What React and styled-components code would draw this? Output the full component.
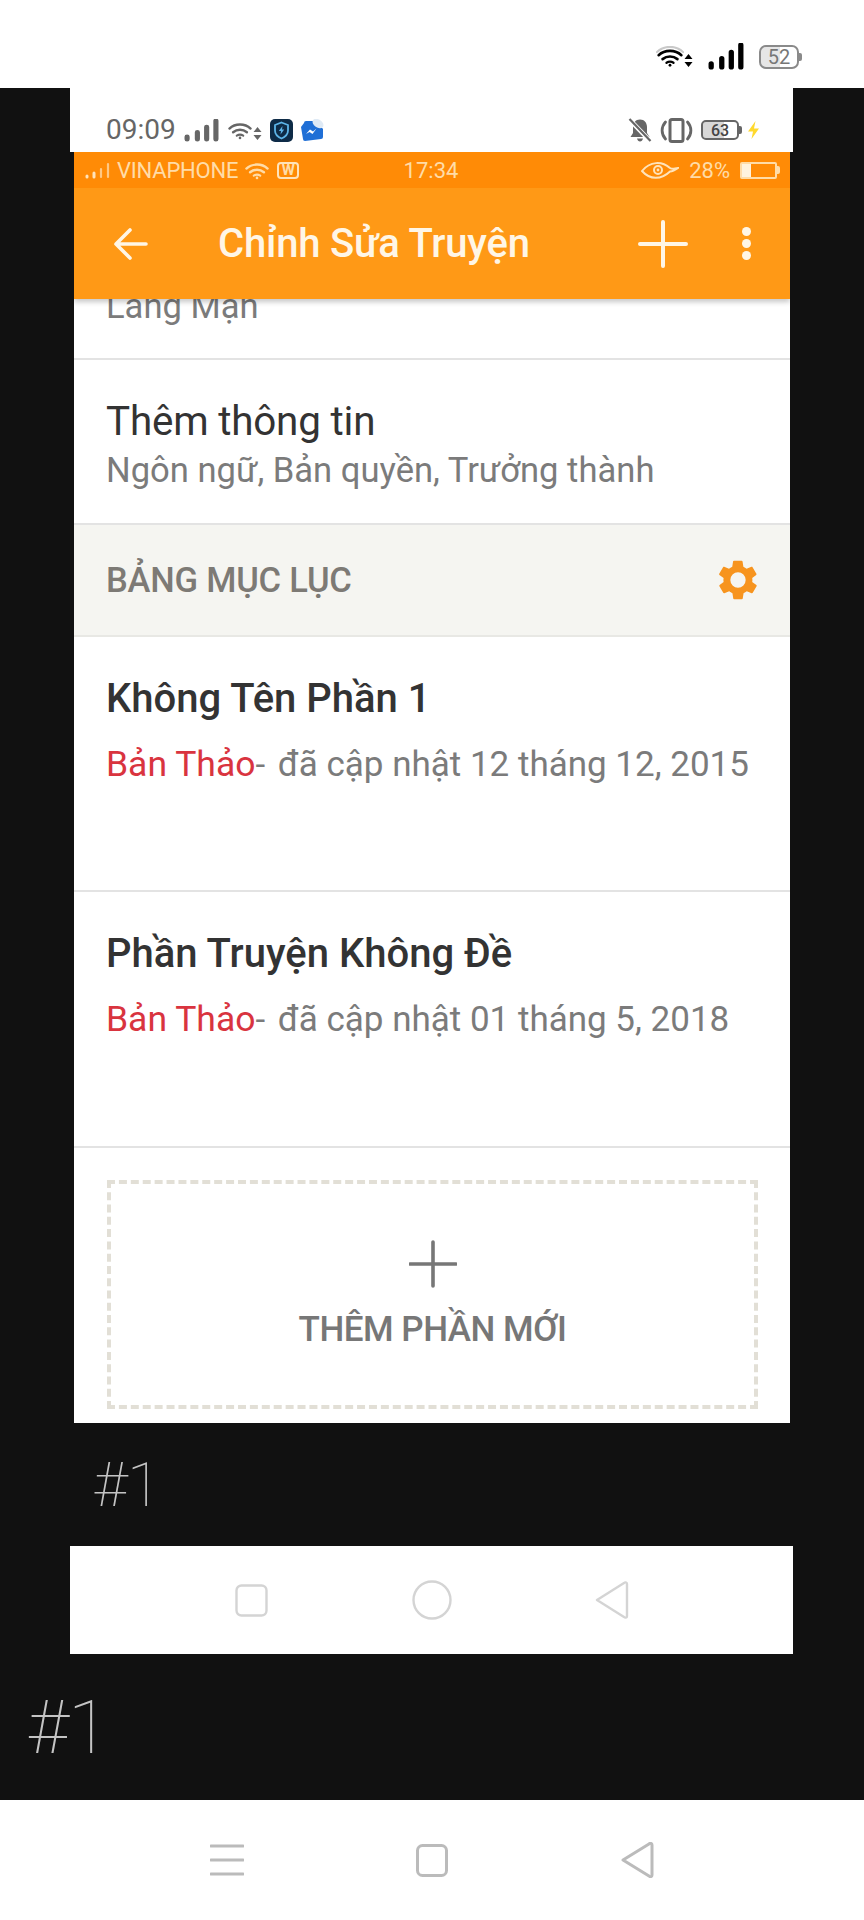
import React from 'react'
import styled, { createGlobalStyle } from 'styled-components'

const GlobalStyle = createGlobalStyle`
    html, body {
        margin: 0;
        padding: 0;
        background: #111;
    }
    body {
        font-family: Roboto, "Noto Sans", sans-serif;
    }
    * {
        box-sizing: border-box;
    }
`

const Wifi = ({ size = 32, color = '#000', ghost }) => (
    <svg width={size} height={size * 0.75} viewBox="0 0 32 24" fill="none" stroke={color} strokeLinecap="round">
        {ghost && <path d="M1 7C9 -1 23 -1 31 7" stroke={ghost} strokeWidth="2.4" />}
        <path d="M3 10.5C10 4 22 4 29 10.5" strokeWidth="3" />
        <path d="M7.5 15C12.5 11 19.5 11 24.5 15" strokeWidth="3" />
        <path d="M12 19.2C14.5 17.6 17.5 17.6 20 19.2" strokeWidth="2.6" />
        <circle cx="16" cy="22" r="1.6" fill={color} stroke="none" />
    </svg>
)

const UpDown = ({ color = '#000' }) => (
    <svg width="9" height="13" viewBox="0 0 9 13" fill={color}>
        <path d="M4.5 0L8.5 5H.5zM4.5 13L.5 8H8.500z" />
    </svg>
)

const Signal = ({ width = 36, height = 27, color = '#000', weight = 5 }) => (
    <svg width={width} height={height} viewBox="0 0 34 26" preserveAspectRatio="none" stroke={color} strokeWidth={weight} strokeLinecap="round">
        <path d="M3 20V23M13 15V23M22 9V23M31 2V23" />
    </svg>
)

const TopBar = styled.div`
    height: 88px;
    background: #fff;
    display: flex;
    justify-content: flex-end;
    align-items: flex-start;
    padding: 43px 65px 0 0;
`

const TopCluster = styled.div`
    display: flex;
    align-items: center;
    gap: 15px;
    height: 27px;
`

const WifiGroup = styled.div`
    display: flex;
    align-items: flex-end;
    gap: ${p => p.$gap || 0}px;
`

const BatteryBody = styled.div`
    position: relative;
    width: ${p => p.$w}px;
    height: ${p => p.$h}px;
    border: 2px solid ${p => p.$line};
    border-radius: ${p => p.$radius}px;
    color: ${p => p.$text};
    font-size: ${p => p.$size}px;
    font-weight: ${p => p.$weight || 400};
    display: flex;
    align-items: center;
    justify-content: center;
    background: linear-gradient(90deg, ${p => p.$fill} ${p => p.$level}%, transparent ${p => p.$level}%);
    background-clip: content-box;

    &::after {
        content: '';
        position: absolute;
        right: -5px;
        top: 50%;
        margin-top: -4px;
        width: 3px;
        height: 8px;
        background: ${p => p.$line};
        border-radius: 0 2px 2px 0;
    }
`

const Frame = styled.div`
    background: #111;
    height: 1712px;
    display: flex;
    flex-direction: column;
`

const Phone = styled.div`
    margin: 0 71px 0 70px;
    display: flex;
    flex-direction: column;
`

const PhoneStatus = styled.div`
    height: 64px;
    background: #fff;
    display: flex;
    align-items: center;
    justify-content: space-between;
    padding: 20px 33px 0 36px;
`

const StatusGroup = styled.div`
    display: flex;
    align-items: center;
    gap: ${p => p.$gap || 8}px;
`

const PhoneClock = styled.span`
    color: #666;
    font-size: 28px;
    line-height: 1;
`

const Screen = styled.div`
    margin: 0 3px 0 4px;
    height: 1271px;
    display: flex;
    flex-direction: column;
    background: #fff;
    overflow: hidden;
`

const AppBar = styled.div`
    position: relative;
    z-index: 2;
    flex: none;
    box-shadow: 0 3px 5px rgba(0, 0, 0, 0.22);
`

const OrangeStatus = styled.div`
    height: 36px;
    background: #ff8b06;
    color: #ffdca8;
    font-size: 22px;
    display: grid;
    grid-template-columns: 1fr auto 1fr;
    align-items: center;
    padding: 0 13px 0 11px;
`

const OrangeLeft = styled.div`
    display: flex;
    align-items: center;
    gap: 4px;
`

const OrangeRight = styled.div`
    display: flex;
    align-items: center;
    justify-content: flex-end;
    gap: 10px;
`

const Carrier = styled.span`
    letter-spacing: -0.2px;
    margin-right: 2px;
`

const WBadge = styled.span`
    width: 22px;
    height: 17px;
    border: 2px solid #ffe3ba;
    border-radius: 4px;
    margin-left: 3px;
    font-size: 15px;
    font-weight: 700;
    line-height: 12px;
    text-align: center;
    overflow: hidden;
`

const Toolbar = styled.div`
    height: 111px;
    background: #ff9916;
    display: flex;
    align-items: center;
    padding: 0 39px 0 40px;
`

const ToolbarTitle = styled.h1`
    flex: 1;
    margin: 0 0 0 70px;
    color: #fff6e6;
    font-size: 40px;
    font-weight: 500;
    letter-spacing: -0.2px;
    white-space: nowrap;
`

const ToolbarActions = styled.div`
    display: flex;
    align-items: center;
    gap: 54px;
`

const Dots = styled.div`
    display: flex;
    flex-direction: column;
    gap: 3px;

    i {
        display: block;
        width: 9px;
        height: 9px;
        border-radius: 50%;
        background: #fff6e6;
    }
`

const Row = styled.div`
    flex: none;
    height: ${p => p.$h}px;
    padding: ${p => p.$pad || 0} 32px 0;
    border-bottom: 2px solid #e3e3e3;
`

const GenreRow = styled(Row)`
    display: flex;
    align-items: flex-end;
    overflow: hidden;
    padding: 0 32px 32px;
`

const InfoTitle = styled.div`
    color: #333;
    font-size: 40.4px;
    line-height: 46px;
    letter-spacing: -0.2px;
    margin: 1px 0 5px;
`

const Sub = styled.div`
    color: #7b7b7b;
    font-size: ${p => p.$size || 34.6}px;
    line-height: 40px;
    white-space: nowrap;
`

const SectionHead = styled.div`
    flex: none;
    height: 112px;
    background: #f5f5f1;
    border-bottom: 2px solid #e8e8e4;
    display: flex;
    align-items: center;
    justify-content: space-between;
    padding: 0 29px 0 32px;
`

const SectionLabel = styled.span`
    color: #7d7a75;
    font-size: 34.5px;
    font-weight: 500;
    letter-spacing: -0.2px;
`

const PartTitle = styled.div`
    color: #333;
    font-size: 40px;
    font-weight: 500;
    line-height: 46px;
    margin: 2px 0 22px;
`

const Draft = styled.span`
    color: #d9343f;
    font-size: 35.5px;
`

const Dash = styled.span`
    margin-right: 4px;
`

const AddArea = styled.div`
    flex: 1;
    padding: 32px 32px 14px 33px;
`

const AddBox = styled.div`
    height: 100%;
    border: 4px dashed #e2dfd6;
    display: flex;
    flex-direction: column;
    align-items: center;
    justify-content: center;
    gap: 21px;
`

const AddLabel = styled.span`
    color: #777;
    font-size: 35px;
    font-weight: 500;
    letter-spacing: -0.5px;
`

const Caption = styled.div`
    color: #c4c4c4;
    font-weight: 100;
    font-size: ${p => p.$size}px;
    line-height: 1;
    padding-left: ${p => p.$left}px;
`

const CaptionBand = styled.div`
    flex: none;
    height: ${p => p.$h}px;
    display: flex;
    align-items: center;
`

const NavBar = styled.div`
    flex: none;
    height: ${p => p.$h}px;
    background: #fff;
    display: grid;
    grid-template-columns: repeat(3, ${p => p.$cell}px);
    justify-content: center;
    justify-items: center;
    align-items: center;
`

const OrangePlus = () => (
    <svg width="50" height="48" viewBox="0 0 50 48" stroke="#fff6e6" strokeWidth="4" strokeLinecap="round">
        <path d="M25 2V46M2 24H48" />
    </svg>
)

const Gear = () => (
    <svg width="46" height="46" viewBox="0 0 24 24" fill="#f7941e">
        <path d="M19.4 13c.1-.3.1-.7.1-1s0-.7-.1-1l2.100-1.600c.2-.2.2-.4.100-.6l-2-3.500c-.1-.2-.4-.3-.6-.2l-2.500 1c-.5-.4-1.100-.7-1.700-1l-.4-2.600c0-.3-.2-.5-.5-.5h-4c-.3 0-.5.2-.5.5l-.4 2.600c-.6.3-1.200.6-1.700 1l-2.500-1c-.2-.1-.5 0-.6.2l-2 3.500c-.1.200-.1.400.1.600L4.500 11c-.1.300-.1.700-.1 1s0 .7.1 1l-2.100 1.600c-.2.200-.2.400-.1.600l2 3.500c.1.200.4.300.6.200l2.500-1c.5.400 1.100.7 1.700 1l.4 2.600c0 .3.2.5.5.5h4c.3 0 .5-.2.5-.5l.4-2.600c.6-.3 1.200-.6 1.700-1l2.500 1c.2.1.5 0 .6-.2l2-3.500c.1-.2.1-.4-.1-.6zM12 16a4 4 0 1 1 0-8 4 4 0 0 1 0 8z" />
    </svg>
)

const Shield = () => (
    <svg width="23" height="23" viewBox="0 0 23 23">
        <rect width="23" height="23" rx="5" fill="#0e2b47" />
        <path d="M11.500 3.500L18 6V11.500C18 15.500 15 18 11.500 19.500C8 18 5 15.500 5 11.500V6Z" fill="none" stroke="#5db4e8" strokeWidth="1.800" />
        <path d="M12.500 7L8.800 12H11L10.500 15.500L14.200 10.500H12Z" fill="#5db4e8" />
    </svg>
)

const Messenger = () => (
    <svg width="23" height="23" viewBox="0 0 23 23">
        <path d="M3 4Q3 2 5 2H15L22 10V18Q22 20 20 20L4 22Q2 22 2 20L0 8Z" fill="#1f6fd6" />
        <ellipse cx="17" cy="4.500" rx="6" ry="4" transform="rotate(35 17 4.500)" fill="#dfeaf5" />
        <path d="M5 15L9 10.500L12 12.500L15.500 9.500L11.500 15L8.500 13Z" fill="#fff" />
    </svg>
)

const MutedBell = () => (
    <svg width="24" height="25" viewBox="0 0 24 25" fill="#666">
        <path d="M12 1.500C7.500 1.500 5 5 5 9V15L2.500 19H21.500L19 15V9C19 5 16.500 1.500 12 1.500ZM9 20.500C9.500 22.500 10.500 23.500 12 23.500S14.500 22.500 15 20.500Z" />
        <path d="M1.500 1.500L22.500 23.500" stroke="#fff" strokeWidth="4.500" />
        <path d="M1.500 1L22.500 23" stroke="#666" strokeWidth="2.200" />
    </svg>
)

const Vibrate = () => (
    <svg width="33" height="25" viewBox="0 0 33 25" fill="none" stroke="#666" strokeWidth="2.400" strokeLinecap="round">
        <rect x="10" y="1.500" width="13" height="22" rx="2" strokeWidth="3" />
        <path d="M5.500 4C1 9 1 16 5.500 21M27.500 4C32 9 32 16 27.500 21" strokeWidth="2.800" />
    </svg>
)

const Bolt = () => (
    <svg width="13" height="18" viewBox="0 0 13 18" fill="#ffd92e">
        <path d="M8.500 0L1 10.500H6L4.500 18L12 7.500H7Z" />
    </svg>
)

const OrangeSignal = () => (
    <svg width="28" height="17" viewBox="0 0 28 17" strokeWidth="2.200" strokeLinecap="round">
        <path d="M2 14V15M9 11V15" stroke="#ffe3ba" strokeWidth="3" />
        <path d="M16 7V15M23 2V15" stroke="#ffc884" />
    </svg>
)

const Eye = () => (
    <svg width="38" height="17" viewBox="0 0 38 17" fill="none" stroke="#ffe3ba" strokeWidth="2">
        <path d="M1 9C9 -1 21 -1 29 6C32 8 34 6 37 6C33 9 31 9.500 29 9.500C20 18 9 18 1 9Z" />
        <circle cx="17" cy="8" r="4" />
        <circle cx="17" cy="8" r="1.400" fill="#ffe3ba" stroke="none" />
    </svg>
)

const ArrowBack = () => (
    <svg width="34" height="32" viewBox="0 0 34 32" fill="none" stroke="#fff6e6" strokeWidth="3.600" strokeLinecap="round" strokeLinejoin="round">
        <path d="M32 16H3M16 2L2 16L16 30" />
    </svg>
)

const BigPlus = () => (
    <svg width="48" height="48" viewBox="0 0 48 48" stroke="#777" strokeWidth="3.600" strokeLinecap="round">
        <path d="M24 2V46M1 24H47" />
    </svg>
)

const NavIcon = ({ kind, w, h, color, weight = 2.400 }) => (
    <svg width={w} height={h} viewBox={`0 0 ${w} ${h}`} fill="none" stroke={color} strokeWidth={weight} strokeLinejoin="round" strokeLinecap="round">
        {kind === 'square' && <rect x="1.500" y="1.500" width={w - 3} height={h - 3} rx="5" />}
        {kind === 'circle' && <ellipse cx={w / 2} cy={h / 2} rx={w / 2 - 1.500} ry={h / 2 - 1.500} />}
        {kind === 'back' && <path d={`M${w - 2} 3V${h - 3}C${w - 2} ${h - 1} ${w - 4} ${h - 1} ${w - 5} ${h - 2}L2 ${h / 2}L${w - 5} 2C${w - 4} 1 ${w - 2} 1 ${w - 2} 3Z`} />}
        {kind === 'menu' && <path d={`M1 2H${w - 1}M1 ${h / 2}H${w - 1}M1 ${h - 2}H${w - 1}`} />}
    </svg>
)

function App() {
    return (
        <>
            <GlobalStyle />
            <TopBar>
                <TopCluster>
                    <WifiGroup>
                        <Wifi size={28} ghost="#c9c9c9" />
                        <UpDown />
                    </WifiGroup>
                    <Signal />
                    <BatteryBody $w={40} $h={24} $line="#8a8a8a" $radius={7} $text="#777" $size={20} $fill="#e6e6e6" $level={52}>52</BatteryBody>
                </TopCluster>
            </TopBar>
            <Frame>
                <Phone>
                    <PhoneStatus>
                        <StatusGroup>
                            <PhoneClock>09:09</PhoneClock>
                            <Signal width={35} height={23} color="#666" />
                            <WifiGroup $gap={-3}>
                                <Wifi size={26} color="#666" />
                                <UpDown color="#666" />
                            </WifiGroup>
                            <Shield />
                            <Messenger />
                        </StatusGroup>
                        <StatusGroup>
                            <MutedBell />
                            <Vibrate />
                            <BatteryBody $w={38} $h={20} $line="#666" $radius={5} $text="#444" $size={16} $weight={500} $fill="#d8d8d8" $level={63}>63</BatteryBody>
                            <Bolt />
                        </StatusGroup>
                    </PhoneStatus>
                    <Screen>
                        <AppBar>
                            <OrangeStatus>
                                <OrangeLeft>
                                    <OrangeSignal />
                                    <Carrier>VINAPHONE</Carrier>
                                    <Wifi size={26} color="#ffdca8" />
                                    <WBadge>W</WBadge>
                                </OrangeLeft>
                                <span>17:34</span>
                                <OrangeRight>
                                    <Eye />
                                    <span>28%</span>
                                    <BatteryBody $w={37} $h={17} $line="#ffdca8" $radius={2} $text="transparent" $size={1} $fill="#fff3df" $level={28} />
                                </OrangeRight>
                            </OrangeStatus>
                            <Toolbar>
                                <ArrowBack />
                                <ToolbarTitle>Chỉnh Sửa Truyện</ToolbarTitle>
                                <ToolbarActions>
                                    <OrangePlus />
                                    <Dots><i /><i /><i /></Dots>
                                </ToolbarActions>
                            </Toolbar>
                        </AppBar>
                        <GenreRow $h={61}>
                            <Sub>Lãng Mạn</Sub>
                        </GenreRow>
                        <Row $h={165} $pad="38px">
                            <InfoTitle>Thêm thông tin</InfoTitle>
                            <Sub>Ngôn ngữ, Bản quyền, Trưởng thành</Sub>
                        </Row>
                        <SectionHead>
                            <SectionLabel>BẢNG MỤC LỤC</SectionLabel>
                            <Gear />
                        </SectionHead>
                        <Row $h={255} $pad="37px">
                            <PartTitle>Không Tên Phần 1</PartTitle>
                            <Sub $size={35}><Draft>Bản Thảo</Draft><Dash>-</Dash> đã cập nhật 12 tháng 12, 2015</Sub>
                        </Row>
                        <Row $h={256} $pad="37px">
                            <PartTitle>Phần Truyện Không Đề</PartTitle>
                            <Sub $size={35}><Draft>Bản Thảo</Draft><Dash>-</Dash> đã cập nhật 01 tháng 5, 2018</Sub>
                        </Row>
                        <AddArea>
                            <AddBox>
                                <BigPlus />
                                <AddLabel>THÊM PHẦN MỚI</AddLabel>
                            </AddBox>
                        </AddArea>
                    </Screen>
                </Phone>
                <CaptionBand $h={123}>
                    <Caption $size={62} $left={93}>#1</Caption>
                </CaptionBand>
                <Phone>
                    <NavBar $h={108} $cell={180}>
                        <NavIcon kind="square" w={33} h={33} color="#d4d4d4" />
                        <NavIcon kind="circle" w={40} h={40} color="#d4d4d4" />
                        <NavIcon kind="back" w={34} h={38} color="#d4d4d4" />
                    </NavBar>
                </Phone>
                <CaptionBand $h={146}>
                    <Caption $size={75} $left={27}>#1</Caption>
                </CaptionBand>
            </Frame>
            <NavBar $h={120} $cell={205}>
                <NavIcon kind="menu" w={34} h={32} color="#bbb" weight={3} />
                <NavIcon kind="square" w={32} h={33} color="#bbb" weight={3} />
                <NavIcon kind="back" w={33} h={36} color="#bbb" weight={3} />
            </NavBar>
        </>
    )
}

export default App
